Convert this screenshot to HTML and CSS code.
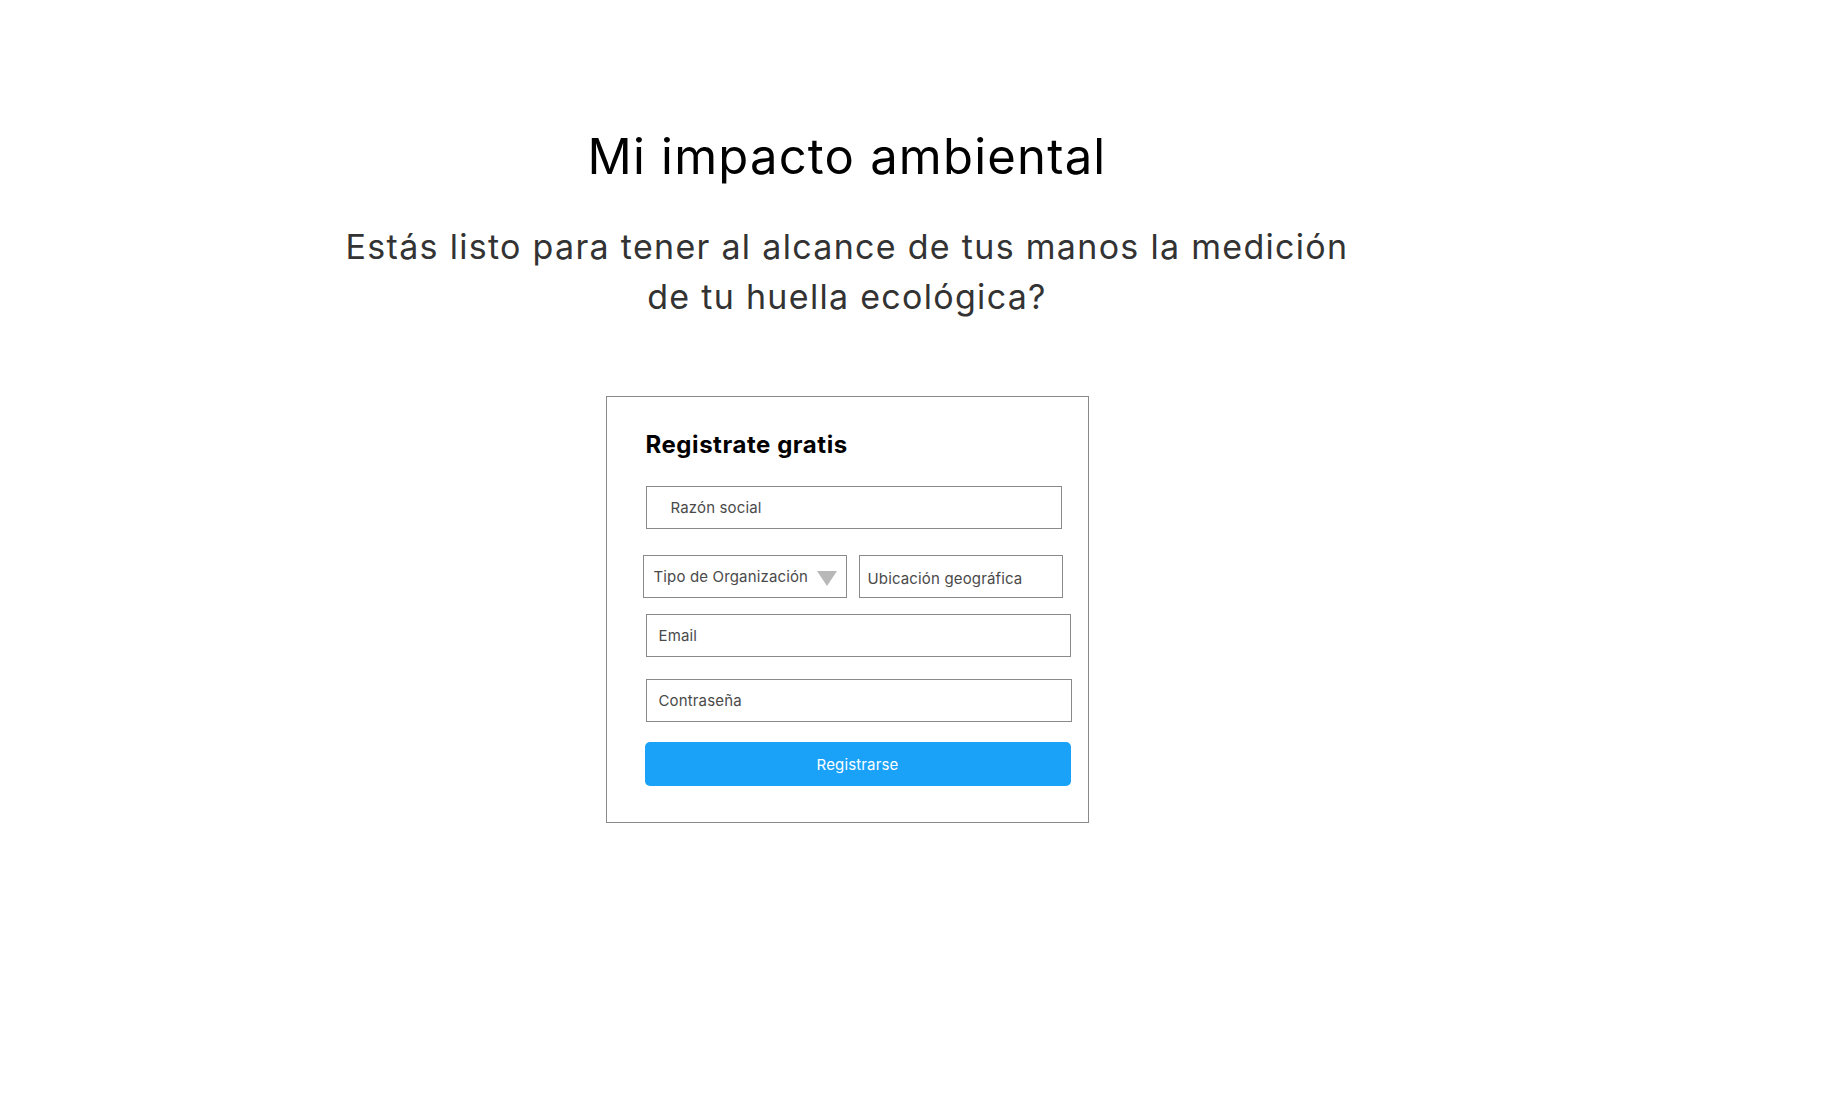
FILE: index.html
```html
<!DOCTYPE html>
<html lang="es">
<head>
<meta charset="utf-8">
<title>Mi impacto ambiental</title>
<link rel="stylesheet" href="styles.css">
</head>
<body>
<main class="page">
  <h1 class="title">Mi impacto ambiental</h1>
  <p class="subtitle">Estás listo para tener al alcance de tus manos la medición<br>de tu huella ecológica?</p>
  <form class="card">
    <h2 class="card-title">Registrate gratis</h2>
    <input class="field field-razon" type="text" placeholder="Razón social">
    <div class="row">
      <div class="select">
        <span>Tipo de Organización</span>
        <span class="caret"></span>
      </div>
      <input class="field field-ubic" type="text" placeholder="Ubicación geográfica">
    </div>
    <input class="field field-email" type="email" placeholder="Email">
    <input class="field field-pass" type="password" placeholder="Contraseña">
    <button class="btn" type="button">Registrarse</button>
  </form>
</main>
</body>
</html>
```

FILE: styles.css
```css
html, body {
  margin: 0;
  padding: 0;
  background: #fff;
}

body {
  font-family: Inter, "Open Sans", "DejaVu Sans", sans-serif;
  color: #000;
}

.page {
  width: 1694px;
  display: flex;
  flex-direction: column;
  align-items: center;
  text-align: center;
}

.title {
  margin: 128px 0 0;
  font-size: 49px;
  line-height: 58px;
  font-weight: 400;
  letter-spacing: 1.2px;
  color: #000;
}

.subtitle {
  margin: 36px 0 0;
  font-size: 34px;
  line-height: 50px;
  font-weight: 400;
  letter-spacing: 1.3px;
  color: #333;
}

.card {
  box-sizing: border-box;
  width: 483px;
  margin-top: 74px;
  border: 1px solid #8a8a8a;
  padding: 33px 0 36px 39px;
  text-align: left;
  display: flex;
  flex-direction: column;
  align-items: flex-start;
}

.card-title {
  margin: 0;
  font-size: 24px;
  line-height: 30px;
  font-weight: 700;
  letter-spacing: 0.55px;
  color: #000;
}

.field,
.select {
  box-sizing: border-box;
  height: 43px;
  border: 1px solid #8a8a8a;
  background: #fff;
  font-family: inherit;
  font-size: 15px;
  letter-spacing: 0.15px;
  color: #4a4a4a;
  outline: none;
  margin: 0;
}

.field::placeholder {
  color: #4a4a4a;
  opacity: 1;
}

.field-razon {
  width: 416px;
  margin-top: 26px;
  padding: 0 0 0 24px;
}

.row {
  display: flex;
  gap: 12px;
  margin: 26px 0 0 -3px;
}

.select {
  width: 204px;
  display: flex;
  align-items: center;
  justify-content: space-between;
  padding: 0 9px 0 10px;
}

.caret {
  width: 0;
  height: 0;
  border-left: 10px solid transparent;
  border-right: 10px solid transparent;
  border-top: 15px solid #b8b8b8;
  margin-top: 4px;
}

.field-ubic {
  width: 204px;
  padding: 4px 0 0 8px;
}

.field-email {
  width: 425px;
  margin-top: 16px;
  padding: 0 0 0 12px;
}

.field-pass {
  width: 426px;
  margin-top: 22px;
  padding: 0 0 0 12px;
}

.btn {
  box-sizing: border-box;
  width: 426px;
  height: 44px;
  margin: 20px 0 0 -1px;
  border: none;
  border-radius: 5px;
  background: #1aa1f8;
  color: #fff;
  font-family: inherit;
  font-size: 15px;
  letter-spacing: 0.15px;
  cursor: pointer;
}
```
